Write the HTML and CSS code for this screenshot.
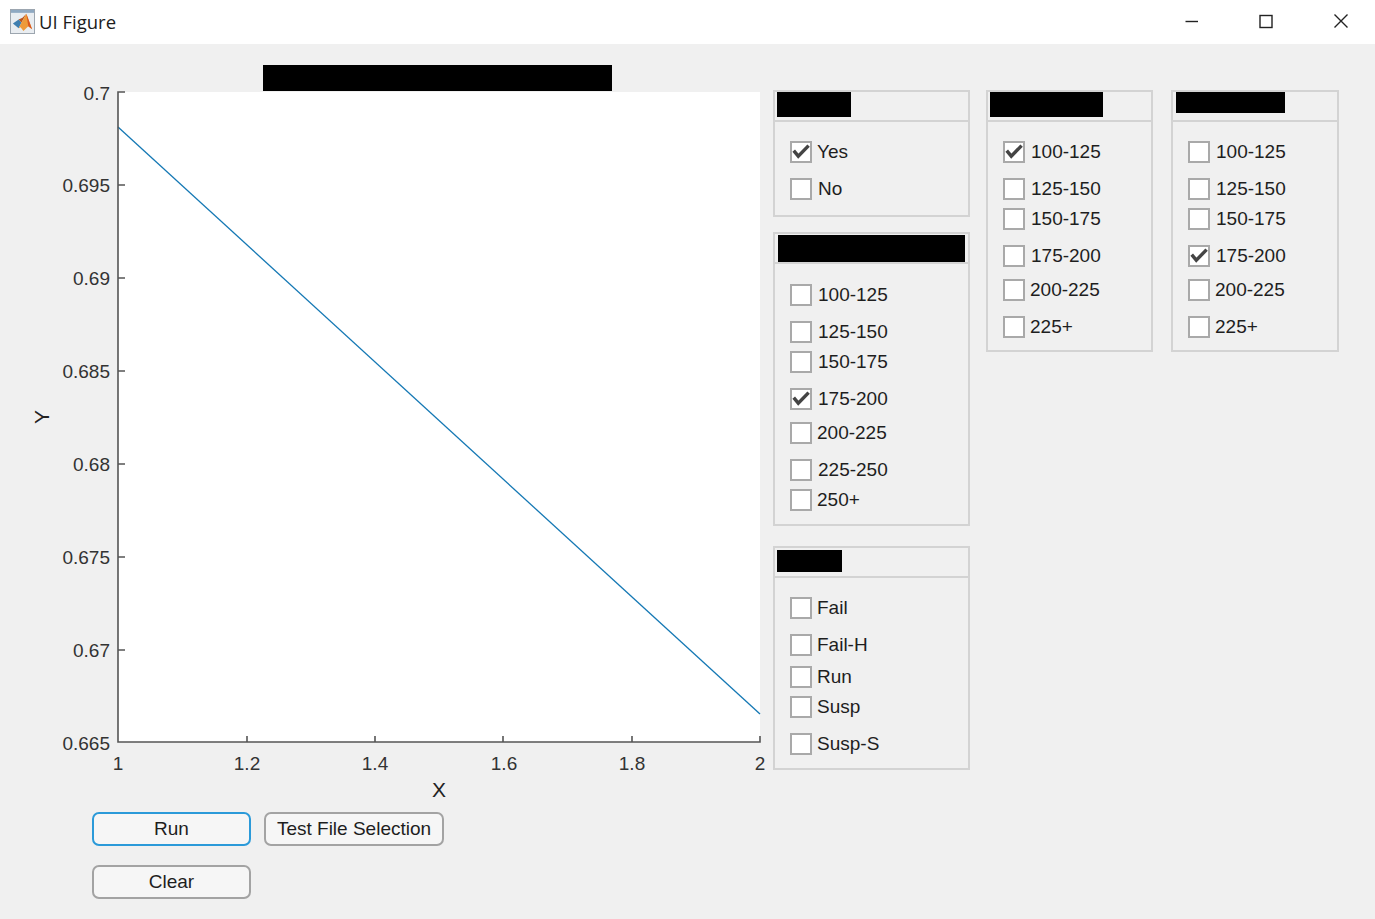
FILE: index.html
```html
<!DOCTYPE html>
<html lang="en">
<head>
<meta charset="utf-8">
<title>UI Figure</title>
<link rel="stylesheet" href="styles.css">
</head>
<body>
<div class="window">
  <header class="titlebar">
    <svg class="app-icon" viewBox="0 0 26 26" aria-hidden="true">
      <rect x="0.5" y="0.5" width="25" height="25" fill="#e9edf1" stroke="#9aa3ad"/>
      <rect x="1" y="1" width="24" height="3" fill="#8fa9c2"/>
      <polygon points="3,15 9,11 12,14 9,20" fill="#3f7fb0"/>
      <polygon points="9,11 13,9 17,5 12,14" fill="#b9531f"/>
      <polygon points="17,5 23,21 19,18 14,23 11,19 9,20 12,14" fill="#ee9a3a"/>
      <polygon points="17,5 23,21 19,18" fill="#d9581f"/>
    </svg>
    <span class="title">UI Figure</span>
    <div class="win-controls">
      <svg class="win-icon" viewBox="0 0 14 14" aria-hidden="true"><path d="M1.5 7.5H14" /></svg>
      <svg class="win-icon" viewBox="0 0 14 14" aria-hidden="true"><rect x="1" y="1.5" width="12" height="12"/></svg>
      <svg class="win-icon" viewBox="0 0 14 14" aria-hidden="true"><path d="M0.5 0.5L13.5 13.5M13.5 0.5L0.5 13.5"/></svg>
    </div>
  </header>

  <main class="content">
    <section class="plot-column">
      <svg class="chart" viewBox="0 44 773 760" role="img">
        <rect class="plot-bg" x="118" y="92" width="642" height="650"/>
        <rect class="redact" x="263" y="65" width="349" height="26"/>
        <path class="data-line" d="M118 127L760 714"/>
        <path class="axis" d="M125 92H118V742H760V736M118 185H125M118 278H125M118 371H125M118 464H125M118 557H125M118 650H125M247 742V736M375 742V736M503 742V736M632 742V736"/>
        <g class="tick-y">
          <text x="110" y="100">0.7</text>
          <text x="110" y="192">0.695</text>
          <text x="110" y="285">0.69</text>
          <text x="110" y="378">0.685</text>
          <text x="110" y="471">0.68</text>
          <text x="110" y="564">0.675</text>
          <text x="110" y="657">0.67</text>
          <text x="110" y="750">0.665</text>
        </g>
        <g class="tick-x">
          <text x="118" y="770">1</text>
          <text x="247" y="770">1.2</text>
          <text x="375" y="770">1.4</text>
          <text x="504" y="770">1.6</text>
          <text x="632" y="770">1.8</text>
          <text x="760" y="770">2</text>
        </g>
        <text class="axis-label" x="439" y="797">X</text>
        <text class="axis-label" transform="translate(49 417) rotate(-90)">Y</text>
      </svg>
      <div class="button-grid">
        <button class="btn btn-run" type="button">Run</button>
        <button class="btn" type="button">Test File Selection</button>
        <button class="btn" type="button">Clear</button>
      </div>
    </section>

    <div class="panel-column col-a">
      <section class="panel pb15">
        <div class="panel-head"><span class="redact-bar r-a"></span></div>
        <div class="panel-body">
          <label class="row tight"><span class="box"><svg class="tick" viewBox="0 0 18 18"><path d="M1.7 7.6L6.3 13.2L16.6 2.6"/></svg></span>Yes</label>
          <label class="row g37"><span class="box"></span>No</label>
        </div>
      </section>
      <section class="panel pb13 mt15">
        <div class="panel-head pt1"><span class="redact-bar r-b"></span></div>
        <div class="panel-body pt20">
          <label class="row"><span class="box"></span>100-125</label>
          <label class="row g37"><span class="box"></span>125-150</label>
          <label class="row g30"><span class="box"></span>150-175</label>
          <label class="row g37"><span class="box"><svg class="tick" viewBox="0 0 18 18"><path d="M1.7 7.6L6.3 13.2L16.6 2.6"/></svg></span>175-200</label>
          <label class="row g34 tight"><span class="box"></span>200-225</label>
          <label class="row g37"><span class="box"></span>225-250</label>
          <label class="row g30 tight"><span class="box"></span>250+</label>
        </div>
      </section>
      <section class="panel pb13 mt20">
        <div class="panel-head pt2"><span class="redact-bar r-c"></span></div>
        <div class="panel-body">
          <label class="row tight"><span class="box"></span>Fail</label>
          <label class="row g37 tight"><span class="box"></span>Fail-H</label>
          <label class="row g32 tight"><span class="box"></span>Run</label>
          <label class="row g30 tight"><span class="box"></span>Susp</label>
          <label class="row g37 tight"><span class="box"></span>Susp-S</label>
        </div>
      </section>
    </div>

    <div class="panel-column col-b">
      <section class="panel pb12">
        <div class="panel-head"><span class="redact-bar r-d"></span></div>
        <div class="panel-body">
          <label class="row"><span class="box"><svg class="tick" viewBox="0 0 18 18"><path d="M1.7 7.6L6.3 13.2L16.6 2.6"/></svg></span>100-125</label>
          <label class="row g37"><span class="box"></span>125-150</label>
          <label class="row g30"><span class="box"></span>150-175</label>
          <label class="row g37"><span class="box"></span>175-200</label>
          <label class="row g34 tight"><span class="box"></span>200-225</label>
          <label class="row g37 tight"><span class="box"></span>225+</label>
        </div>
      </section>
    </div>

    <div class="panel-column col-c">
      <section class="panel pb12">
        <div class="panel-head"><span class="redact-bar r-e"></span></div>
        <div class="panel-body">
          <label class="row"><span class="box"></span>100-125</label>
          <label class="row g37"><span class="box"></span>125-150</label>
          <label class="row g30"><span class="box"></span>150-175</label>
          <label class="row g37"><span class="box"><svg class="tick" viewBox="0 0 18 18"><path d="M1.7 7.6L6.3 13.2L16.6 2.6"/></svg></span>175-200</label>
          <label class="row g34 tight"><span class="box"></span>200-225</label>
          <label class="row g37 tight"><span class="box"></span>225+</label>
        </div>
      </section>
    </div>
  </main>
</div>
</body>
</html>
```
FILE: styles.css
```css
* { box-sizing: border-box; }
html, body { margin: 0; padding: 0; }
body {
  width: 1375px;
  height: 919px;
  overflow: hidden;
  background: #f0f0f0;
  color: #1e1e1e;
  font-family: "Liberation Sans", Arial, sans-serif;
  font-size: 19px;
}
.window { display: flex; flex-direction: column; height: 919px; }

.titlebar {
  display: flex;
  align-items: center;
  height: 44px;
  padding: 0 27px 2px 10px;
  background: #fff;
  flex: none;
}
.app-icon { width: 25px; height: 25px; flex: none; }
.title {
  margin-left: 4px;
  font-family: "Open Sans", sans-serif;
  font-size: 18.5px;
  color: #1c1c1c;
}
.win-controls { margin-left: auto; display: flex; gap: 61px; align-items: center; }
.win-icon { width: 14px; height: 14px; fill: none; stroke: #222; stroke-width: 1.4; overflow: visible; }

.content { display: flex; flex: 1; }
.plot-column { width: 773px; flex: none; }
.chart { display: block; width: 773px; height: 760px; }
.plot-bg { fill: #fff; }
.redact { fill: #000; }
.data-line { fill: none; stroke: #1478b4; stroke-width: 1.3; }
.axis { fill: none; stroke: #555; stroke-width: 1.6; }
.chart text { font-family: "Liberation Sans", Arial, sans-serif; font-size: 19px; fill: #333; }
.tick-y text { text-anchor: end; }
.tick-x text { text-anchor: middle; }
.chart .axis-label { font-size: 21px; text-anchor: middle; fill: #222; }

.button-grid {
  display: grid;
  grid-template-columns: 159px 180px;
  grid-auto-rows: 34px;
  column-gap: 13px;
  row-gap: 19px;
  margin: 8px 0 0 92px;
}
.btn {
  padding: 0;
  border: 2px solid #a3a3a3;
  border-radius: 7px;
  background: #f6f6f6;
  color: #1e1e1e;
  font: 19px "Liberation Sans", Arial, sans-serif;
}
.btn-run { border-color: #2b9ad9; }

.panel-column { display: flex; flex-direction: column; padding-top: 46px; flex: none; }
.col-a { width: 197px; }
.col-b { width: 167px; margin-left: 16px; }
.col-c { width: 168px; margin-left: 18px; }

.panel { border: 2px solid #d3d3d3; }
.mt15 { margin-top: 15px; }
.mt20 { margin-top: 20px; }

.panel-head { height: 30px; border-bottom: 2px solid #d3d3d3; }
.pt1 { padding-top: 1px; }
.pt2 { padding-top: 2px; }
.redact-bar { display: block; background: #000; }
.r-a { width: 74px; height: 25px; margin-left: 2px; }
.r-b { width: 187px; height: 27px; margin-left: 3px; }
.r-c { width: 65px; height: 22px; margin-left: 2px; }
.r-d { width: 113px; height: 25px; margin-left: 2px; }
.r-e { width: 109px; height: 21px; margin-left: 3px; }

.panel-body { display: flex; flex-direction: column; padding: 19px 0 14px 15px; }
.pb12 .panel-body { padding-bottom: 12px; }
.pb13 .panel-body { padding-bottom: 13px; }
.pb15 .panel-body { padding-bottom: 15px; }
.panel-body.pt20 { padding-top: 20px; }
.row { display: flex; align-items: center; gap: 6px; height: 22px; line-height: 22px; }
.tight { gap: 5px; }
.g30 { margin-top: 8px; }
.g32 { margin-top: 10px; }
.g34 { margin-top: 12px; }
.g37 { margin-top: 15px; }

.box {
  display: block;
  width: 22px;
  height: 22px;
  flex: none;
  border: 2px solid #a9a9a9;
  background: #fff;
}
.tick { display: block; width: 18px; height: 18px; fill: none; stroke: #444; stroke-width: 3.4; }
```
